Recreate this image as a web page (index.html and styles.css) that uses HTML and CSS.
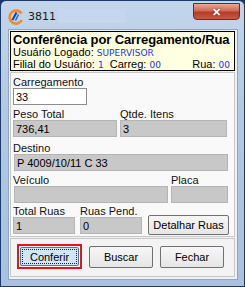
FILE: index.html
```html
<!DOCTYPE html>
<html lang="pt-BR">
<head>
    <meta charset="UTF-8">
    <title>3811</title>
    <link rel="stylesheet" href="styles.css">
</head>
<body>
    <div id="window">
        <div id="titleBar">
            <svg class="app-icon" width="16" height="16" viewBox="0 0 16 16">
                <path d="M13.5 4.5 A6.5 6.5 0 1 0 13.8 11.2" fill="none" stroke="#f08a2c" stroke-width="2.6"/>
                <path d="M4.5 11 L8.5 3.5" stroke="#1f3f8f" stroke-width="2"/>
                <path d="M7.5 11.5 L10.5 5.5" stroke="#2f66c4" stroke-width="1.6"/>
            </svg>
            <span class="title-text">3811</span>
            <span class="title-blur"></span>
            <div class="close-btn">&#x2715;</div>
        </div>

        <div id="client">
            <div class="info-box">
                <div class="info-title">Conferência por Carregamento/Rua</div>
                <div class="info-line">Usuário Logado: <span class="val">SUPERVISOR</span></div>
                <div class="info-line spread">
                    <span>Filial do Usuário: <span class="val">1</span></span>
                    <span class="carreg">Carreg: <span class="val">00</span></span>
                    <span class="rua">Rua: <span class="val">00</span></span>
                </div>
            </div>

            <div class="form-panel">
                <div class="field row1">
                    <label>Carregamento</label>
                    <div class="input edit w-carreg">33</div>
                </div>

                <div class="row row2">
                    <div class="field">
                        <label>Peso Total</label>
                        <div class="input ro w-peso">736,41</div>
                    </div>
                    <div class="field">
                        <label>Qtde. Itens</label>
                        <div class="input ro w-qtde">3</div>
                    </div>
                </div>

                <div class="field row3">
                    <label>Destino</label>
                    <div class="input ro w-destino">P 4009/10/11 C 33</div>
                </div>

                <div class="row row4">
                    <div class="field">
                        <label>Veículo</label>
                        <div class="input ro w-veiculo"></div>
                    </div>
                    <div class="field">
                        <label>Placa</label>
                        <div class="input ro w-placa"></div>
                    </div>
                </div>

                <div class="row row5">
                    <div class="field">
                        <label>Total Ruas</label>
                        <div class="input ro w-ruas">1</div>
                    </div>
                    <div class="field">
                        <label>Ruas Pend.</label>
                        <div class="input ro w-ruas">0</div>
                    </div>
                    <button class="btn btn-detalhar">Detalhar Ruas</button>
                </div>
            </div>

            <div class="button-panel">
                <div class="focus-ring"><button class="btn btn-main focused">Conferir</button></div>
                <button class="btn btn-main">Buscar</button>
                <button class="btn btn-main">Fechar</button>
            </div>
        </div>
    </div>
</body>
</html>
```

FILE: styles.css
```css
body {
    margin: 0;
    padding: 0;
    background: #1d3260;
    font-family: "Liberation Sans", Arial, sans-serif;
    font-size: 11px;
    color: #000;
}
#window {
    width: 245px;
    height: 287px;
    box-sizing: border-box;
    border: 1px solid #1d3a6c;
    border-radius: 6px 6px 0 0;
    background: linear-gradient(#c3d5ea, #b2c8e2 40%, #a9c1de);
    padding: 0 6px 6px 7px;
    display: flex;
    flex-direction: column;
}
#titleBar {
    height: 28px;
    display: flex;
    align-items: center;
    position: relative;
}
.app-icon {
    margin-top: 3px;
}
.title-text {
    margin-left: 4px;
    margin-top: 3px;
    font-family: "DejaVu Sans", sans-serif;
    font-size: 11px;
    color: #1a1a1a;
}
.title-blur {
    width: 67px;
    height: 14px;
    margin-left: 2px;
    margin-top: 2px;
    background: #c5d6ed;
}
.close-btn {
    position: absolute;
    right: -2px;
    top: 2px;
    width: 47px;
    height: 17px;
    border: 1px solid #6d2a2a;
    border-radius: 0 0 4px 4px;
    background: linear-gradient(#e8a89a, #d16a5a 45%, #b83a28 55%, #c95a40);
    color: #fff;
    font-size: 11px;
    font-weight: bold;
    text-align: center;
    line-height: 17px;
    text-shadow: 0 0 2px #5a1a1a;
    box-sizing: border-box;
}
#client {
    flex: 1;
    background: #f0f0f0;
    border: 1px solid #8ea6c4;
    padding: 1px 2px 2px 1px;
    display: flex;
    flex-direction: column;
}
.info-box {
    background: #ffffe1;
    border: 1px solid #000;
    padding: 1px 2px 1px 2px;
    height: 36px;
}
.info-title {
    font-weight: bold;
    font-size: 13px;
    line-height: 14px;
    letter-spacing: -0.1px;
    white-space: nowrap;
}
.info-line {
    font-size: 11px;
    line-height: 11px;
    padding-right: 2px;
    white-space: nowrap;
}
.spread {
    display: flex;
}
.carreg {
    margin-left: 6px;
}
.rua {
    margin-left: auto;
}
.val {
    color: #1f2fe8;
    font-family: "DejaVu Sans", sans-serif;
    font-size: 9px;
}
.form-panel {
    background: #f9f9f9;
    border: 1px solid #c8c8c8;
    margin-top: 1px;
    padding: 3px 0 0 2px;
    height: 165px;
    box-sizing: border-box;
}
.field {
    display: flex;
    flex-direction: column;
}
.field label {
    line-height: 12px;
    height: 12px;
    color: #111;
}
.row {
    display: flex;
    gap: 3px;
}
.row2, .row4 {
    margin-top: 3px;
}
.row3 {
    margin-top: 5px;
}
.row5 {
    margin-top: 2px;
    align-items: flex-end;
    gap: 5px;
}
.input {
    height: 17px;
    box-sizing: border-box;
    border: 1px solid #a8a8a8;
    padding: 1px 2px;
    line-height: 14px;
    font-size: 11px;
}
.edit {
    background: #fff;
    border-color: #8d8d8d;
}
.ro {
    background: #c8c8c8;
    border-color: #b4b4b4;
}
.w-carreg { width: 74px; }
.w-peso { width: 104px; }
.w-qtde { width: 107px; }
.w-destino { width: 214px; margin-left: 1px; }
.w-veiculo { width: 154px; margin-left: 1px; }
.w-placa { width: 57px; }
.w-ruas { width: 62px; }
.btn {
    font-family: "Liberation Sans", Arial, sans-serif;
    font-size: 11px;
    color: #000;
    background: linear-gradient(#f6f6f6, #e6e6e6);
    border: 1px solid #707070;
    border-radius: 2px;
    padding: 0;
}
.btn-detalhar {
    width: 81px;
    height: 20px;
    margin-bottom: -1px;
    margin-left: 1px;
}
.button-panel {
    flex: 1;
    margin-top: 1px;
    border: 1px solid #c8c8c8;
    background: #f3f3f3;
    display: flex;
    align-items: center;
    gap: 7px;
    padding: 0 0 2px 6px;
}
.focus-ring {
    border: 2px solid #e01818;
    padding: 1px;
    display: flex;
}
.btn-main {
    width: 64px;
    height: 22px;
}
.focused {
    background: #cfe6f9;
    border-color: #3c7fb1;
    outline: 1px dotted #222;
    outline-offset: -3px;
    width: 59px;
    height: 19px;
}
```
